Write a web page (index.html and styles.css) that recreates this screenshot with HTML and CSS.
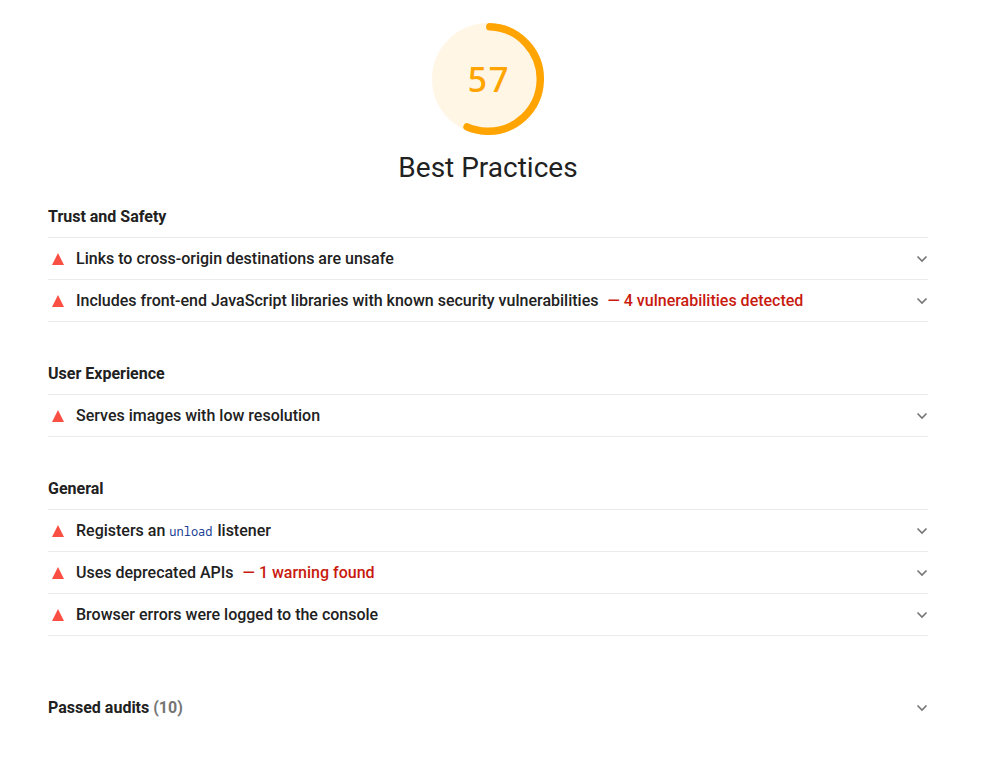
FILE: index.html
```html
<!DOCTYPE html>
<html lang="en">
<head>
    <meta charset="UTF-8">
    <meta name="viewport" content="width=device-width, initial-scale=1.0">
    <title>Best Practices</title>
    <link rel="stylesheet" href="styles.css">
</head>
<body>
    <svg class="sprite" aria-hidden="true">
        <symbol id="chevron" viewBox="0 0 12 8">
            <path d="M1.5 1.5 6 6l4.5-4.5" fill="none" stroke="currentColor" stroke-width="1.6"/>
        </symbol>
        <symbol id="fail" viewBox="0 0 12 12">
            <path d="M6 0l6 12H0z" fill="currentColor"/>
        </symbol>
    </svg>

    <main class="report">
        <header class="score">
            <div class="gauge">
                <svg class="gauge-svg" viewBox="0 0 120 120" aria-hidden="true">
                    <circle class="gauge-base" cx="60" cy="60" r="60"/>
                    <circle class="gauge-arc" cx="60" cy="60" r="56" pathLength="100" transform="rotate(-88 60 60)"/>
                </svg>
                <span class="gauge-value">57</span>
            </div>
            <h1 class="score-title">Best Practices</h1>
        </header>

        <section class="group">
            <h2 class="group-title">Trust and Safety</h2>
            <button class="audit">
                <svg class="fail"><use href="#fail"/></svg>
                <span class="audit-text">Links to cross-origin destinations are unsafe</span>
                <svg class="chevron"><use href="#chevron"/></svg>
            </button>
            <button class="audit">
                <svg class="fail"><use href="#fail"/></svg>
                <span class="audit-text">Includes front-end JavaScript libraries with known security vulnerabilities <span class="detail">— 4 vulnerabilities detected</span></span>
                <svg class="chevron"><use href="#chevron"/></svg>
            </button>
        </section>

        <section class="group">
            <h2 class="group-title">User Experience</h2>
            <button class="audit">
                <svg class="fail"><use href="#fail"/></svg>
                <span class="audit-text">Serves images with low resolution</span>
                <svg class="chevron"><use href="#chevron"/></svg>
            </button>
        </section>

        <section class="group">
            <h2 class="group-title">General</h2>
            <button class="audit">
                <svg class="fail"><use href="#fail"/></svg>
                <span class="audit-text">Registers an <code>unload</code> listener</span>
                <svg class="chevron"><use href="#chevron"/></svg>
            </button>
            <button class="audit">
                <svg class="fail"><use href="#fail"/></svg>
                <span class="audit-text">Uses deprecated APIs <span class="detail">— 1 warning found</span></span>
                <svg class="chevron"><use href="#chevron"/></svg>
            </button>
            <button class="audit">
                <svg class="fail"><use href="#fail"/></svg>
                <span class="audit-text">Browser errors were logged to the console</span>
                <svg class="chevron"><use href="#chevron"/></svg>
            </button>
        </section>

        <button class="passed">
            <span class="passed-text">Passed audits <span class="count">(10)</span></span>
            <svg class="chevron"><use href="#chevron"/></svg>
        </button>
    </main>
</body>
</html>
```
FILE: styles.css
```css
:root {
    --text: #212121;
    --muted: #757575;
    --line: #ebebeb;
    --average: #ffa400;
    --average-light: #fff6e6;
    --fail: #fa5044;
    --fail-text: #c81a0e;
    --code: #1a3f94;
    --mono: "Noto Sans Mono", "DejaVu Sans Mono", monospace;
}

* {
    margin: 0;
    padding: 0;
    box-sizing: border-box;
}

body {
    background: white;
    color: var(--text);
    font-family: Roboto, sans-serif;
    font-size: 16px;
    line-height: 24px;
}

.sprite {
    display: none;
}

.report {
    padding: 19px 74px 32px 48px;
}

/* Score gauge */
.score {
    display: flex;
    flex-direction: column;
    align-items: center;
    margin-bottom: 19px;
}

.gauge {
    display: grid;
    place-items: center;
    width: 120px;
    height: 120px;
}

.gauge-svg,
.gauge-value {
    grid-area: 1 / 1;
}

.gauge-svg {
    width: 112px;
    height: 112px;
}

.gauge-base {
    fill: var(--average-light);
}

.gauge-arc {
    fill: none;
    stroke: var(--average);
    stroke-width: 8;
    stroke-linecap: round;
    stroke-dasharray: 56 100;
}

.gauge-value {
    color: var(--average);
    font-family: var(--mono);
    font-size: 35px;
    font-weight: 500;
    line-height: 40px;
}

.score-title {
    margin-top: 11px;
    font-size: 28px;
    font-weight: 400;
    line-height: 36px;
}

/* Audit groups */
.group {
    margin-bottom: 40px;
}

.group-title {
    padding-bottom: 8px;
    border-bottom: 1px solid var(--line);
    font-size: 16px;
    font-weight: 700;
    line-height: 24px;
}

.audit,
.passed {
    display: flex;
    align-items: center;
    width: 100%;
    border: none;
    background: none;
    color: inherit;
    font: inherit;
    font-weight: 500;
    text-align: left;
    cursor: pointer;
}

.audit {
    min-height: 42px;
    padding-left: 4px;
    border-bottom: 1px solid var(--line);
}

.audit-text,
.passed-text {
    flex: 1;
}

.fail {
    width: 12px;
    height: 12px;
    margin-right: 12px;
    color: var(--fail);
}

.chevron {
    width: 12px;
    height: 8px;
    color: var(--muted);
}

.detail {
    margin-left: 5px;
    color: var(--fail-text);
}

.audit code {
    padding-right: 1px;
    color: var(--code);
    font-family: var(--mono);
    font-size: 12px;
    font-weight: 400;
    line-height: 16px;
}

.passed {
    margin-top: 60px;
    font-weight: 700;
}

.count {
    color: var(--muted);
}
```
